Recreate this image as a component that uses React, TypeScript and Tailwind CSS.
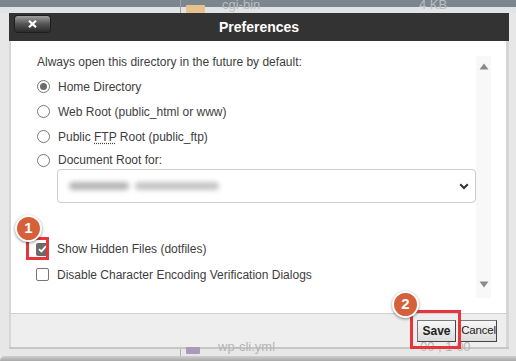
import React from "react";

function Radio({ checked }: { checked?: boolean }) {
  return (
    <span className="flex h-[13px] w-[13px] shrink-0 items-center justify-center rounded-full border border-[#767676] bg-white">
      {checked && <span className="h-[7px] w-[7px] rounded-full bg-[#6b6b6b]" />}
    </span>
  );
}

function Check({ checked }: { checked?: boolean }) {
  return checked ? (
    <span className="flex h-[13px] w-[13px] shrink-0 items-center justify-center rounded-[2px] bg-[#6b6b6b]">
      <svg width="9" height="8" viewBox="0 0 9 8">
        <path d="M1 4.2 L3.4 6.4 L8 1.2" stroke="#fff" strokeWidth="1.8" fill="none" />
      </svg>
    </span>
  ) : (
    <span className="h-[13px] w-[13px] shrink-0 rounded-[2px] border border-[#767676] bg-white" />
  );
}

function Badge({ n, className }: { n: string; className: string }) {
  return (
    <div
      className={
        "absolute flex h-[27px] w-[27px] items-center justify-center rounded-full border-2 border-white bg-[#d5603a] text-[15px] font-bold text-white shadow-[0_1px_3px_rgba(0,0,0,0.45)] " +
        className
      }
    >
      {n}
    </div>
  );
}

export default function App() {
  return (
    <div className="relative h-[361px] w-[516px] overflow-hidden bg-[#e7e7e7] font-['Liberation_Sans',Arial,sans-serif] text-[12px] text-[#3d3d3d]">
      <div className="flex flex-col">
        {/* underlying page strip */}
        <div className="h-[7px] bg-[#7c868f]" />
        <div className="relative h-[6px] bg-[#e2e3e4]">
          <div className="absolute left-[180px] top-[-7px] h-[13px] w-px bg-[#9aa1a8]" />
          <div className="absolute left-[186px] top-[-2px] h-[8px] w-[19px] rounded-[1px] bg-[#e6c38c]" />
          <div className="absolute left-[222px] top-[-9px] text-[13px] leading-[13px] text-[#b9bdc1]">cgi-bin</div>
          <div className="absolute left-[419px] top-[-9px] text-[13px] leading-[13px] text-[#b9bdc1]">4 KB</div>
        </div>

        {/* dialog */}
        <div className="ml-[9px] flex w-[500px] flex-col">
          {/* header */}
          <div className="relative flex h-[28px] items-center justify-center bg-[#333333]">
            <div className="absolute left-[6px] top-[3px] flex h-[16px] w-[35px] items-center justify-center rounded-[3px] bg-linear-to-b from-[#a0a0a0] via-[#555555] to-[#2b2b2b] shadow-[0_0_0_1px_#1e1e1e]">
              <svg width="9" height="8" viewBox="0 0 9 8">
                <path d="M1 0.8 L8 7.2 M8 0.8 L1 7.2" stroke="#fff" strokeWidth="2.2" />
              </svg>
            </div>
            <span className="text-[14px] font-bold text-white">Preferences</span>
          </div>

          {/* body */}
          <div className="h-[272px] border-l-2 border-r-[3px] border-[#d6d6d6] bg-white pt-[15px]">
            <div className="ml-[15px] mr-[15px] flex h-[242px]">
              <div className="flex flex-1 flex-col pl-[10px]">
                <div className="ml-px h-[13px] leading-[13px]">
                  Always open this directory in the future by default:
                </div>
                <div className="mt-[5px] flex h-[25px] items-center gap-[8px] pl-px">
                  <Radio checked />
                  <span>Home Directory</span>
                </div>
                <div className="flex h-[25px] items-center gap-[8px] pl-px">
                  <Radio />
                  <span>Web Root (public_html or www)</span>
                </div>
                <div className="flex h-[25px] items-center gap-[8px] pl-px">
                  <Radio />
                  <span>
                    Public <span className="underline decoration-dotted underline-offset-2">FTP</span> Root (public_ftp)
                  </span>
                </div>
                <div className="mt-[2px] flex h-[18px] items-center gap-[8px] pl-px">
                  <Radio />
                  <span>Document Root for:</span>
                </div>
                <div className="relative ml-[21px] flex h-[34px] items-center rounded-[4px] border border-[#cccccc] bg-white">
                  <div className="ml-[11px] flex items-center gap-[6px] blur-[2.5px]">
                    <span className="h-[8px] w-[60px] rounded bg-[#b5b5b5]" />
                    <span className="h-[8px] w-[84px] rounded bg-[#c4c4c4]" />
                  </div>
                  <svg className="absolute right-[6px] top-[13px]" width="10" height="7" viewBox="0 0 10 7">
                    <path d="M1.2 1.2 L5 5 L8.8 1.2" stroke="#333" strokeWidth="2" fill="none" />
                  </svg>
                </div>
                <div className="mt-[33px] flex h-[26px] items-center gap-[8px]">
                  <Check checked />
                  <span>Show Hidden Files (dotfiles)</span>
                </div>
                <div className="flex h-[25px] items-center gap-[8px]">
                  <Check />
                  <span>Disable Character Encoding Verification Dialogs</span>
                </div>
              </div>
              {/* scrollbar */}
              <div className="flex w-[15px] flex-col items-center justify-between bg-[#f8f8f8] pb-[10px] pt-[7px]">
                <svg width="10" height="7" viewBox="0 0 10 7">
                  <path d="M5 0.5 L9.5 6.5 L0.5 6.5 Z" fill="#8a8a8a" />
                </svg>
                <svg width="10" height="7" viewBox="0 0 10 7">
                  <path d="M0.5 0.5 L9.5 0.5 L5 6.5 Z" fill="#8a8a8a" />
                </svg>
              </div>
            </div>
          </div>

          {/* footer */}
          <div className="flex h-[34px] items-start justify-end gap-[4px] border-l-2 border-r-[3px] border-t border-[#d0d0d0] border-l-[#d6d6d6] border-r-[#d6d6d6] bg-[#eeeeee] pr-[9px] pt-[6px]">
            <button className="h-[22px] w-[39px] border border-[#7a7a7a] border-b-[#444] border-r-[#444] bg-linear-to-b from-[#f7f7f7] to-[#dcdcdc] text-[12px] font-bold text-[#222]">
              Save
            </button>
            <button className="h-[22px] w-[37px] border border-[#7a7a7a] border-b-[#444] border-r-[#444] bg-linear-to-b from-[#f7f7f7] to-[#dcdcdc] text-[11.5px] tracking-[-0.2px] text-[#222]">
              Cancel
            </button>
          </div>
          <div className="h-[2px] bg-[#c6c6c6]" />
        </div>

        {/* underlying page bottom */}
        <div className="relative h-[12px]">
          <div className="absolute left-[180px] top-0 h-[7px] w-px bg-[#b0b0b0]" />
          <div className="absolute left-[186px] top-[-2px] h-[7px] w-[14px] rounded-[1px] bg-[#a99bb8]" />
          <div className="absolute left-[218px] top-[-9px] text-[13px] leading-[13px] text-[#b5b5b5]">wp-cli.yml</div>
          <div className="absolute left-[420px] top-[-9px] text-[13px] leading-[13px] text-[#b5b5b5]">00 , 1 00</div>
          <div className="absolute bottom-0 left-0 h-[5px] w-full rounded-tl-[10px] bg-linear-to-b from-[#cfcfcf] to-[#a8a8a8]" />
        </div>
      </div>

      {/* annotations */}
      <div className="absolute left-[26px] top-[237px] h-[23px] w-[23px] border-[3px] border-[#e8353b]" />
      <Badge n="1" className="left-[15px] top-[215px]" />
      <div className="absolute left-[410px] top-[310px] h-[39px] w-[51px] border-[3px] border-[#e8353b]" />
      <Badge n="2" className="left-[392px] top-[291px]" />
    </div>
  );
}
